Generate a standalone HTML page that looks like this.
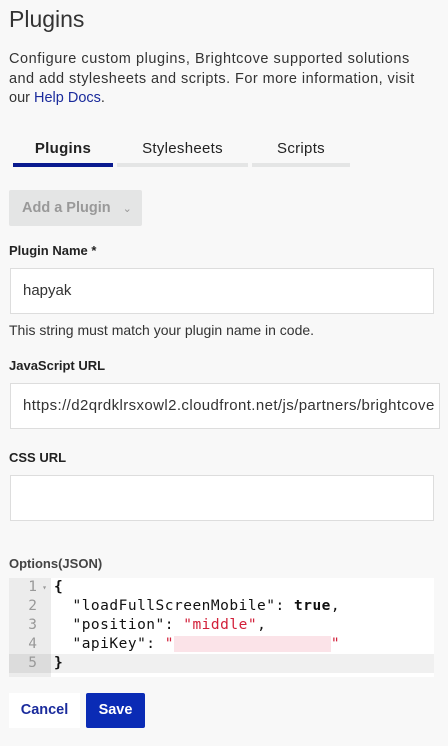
<!DOCTYPE html>
<html><head><style>
body{margin:0;background:#f8f8f8;font-family:"Liberation Sans",sans-serif;color:#222;width:448px;height:746px;overflow:hidden;position:relative}
.a{position:absolute}
h1{position:absolute;left:9px;top:6px;margin:0;font-size:23px;font-weight:normal;color:#333}
.p{left:9px;top:50px;font-size:14.5px;line-height:19.5px;color:#333;width:440px;white-space:nowrap}
.p a{color:#1a2b9c;text-decoration:none}
.tab{font-size:15px;top:140px;text-align:center;color:#222;letter-spacing:0.3px}
.ul{top:163px;height:4px;background:#e4e5e5}
.lbl{left:9px;font-size:13px;font-weight:bold;color:#222}
.in{left:10px;width:424px;height:46px;background:#fff;border:1px solid #ddd;box-sizing:border-box;font-size:15px;color:#333;padding:13px 12px;white-space:nowrap;overflow:hidden}
.code{font-family:"DejaVu Sans Mono","Liberation Mono",monospace;font-size:14.5px;letter-spacing:0.5px}
.ln{left:9px;width:42px;text-align:right;color:#999;box-sizing:border-box;padding-right:14px;letter-spacing:0}
</style></head><body>
<h1>Plugins</h1>
<div class="a p"><span style="letter-spacing:0.55px">Configure custom plugins, Brightcove supported solutions</span><br><span style="letter-spacing:0.45px">and add stylesheets and scripts. For more information, visit</span><br>our <a>Help Docs</a>.</div>
<div class="a tab" style="left:13px;width:100px;font-weight:bold">Plugins</div>
<div class="a tab" style="left:117px;width:131px">Stylesheets</div>
<div class="a tab" style="left:252px;width:98px">Scripts</div>
<div class="a ul" style="left:13px;width:100px;background:#0a1a8f"></div>
<div class="a ul" style="left:117px;width:131px"></div>
<div class="a ul" style="left:252px;width:98px"></div>
<div class="a" style="left:9px;top:190px;width:133px;height:36px;background:#e4e5e5;border-radius:2px;color:#999;font-weight:bold;font-size:14.5px;line-height:36px;padding-left:13px;box-sizing:border-box">Add a Plugin <span style="font-weight:normal;font-size:11px;margin-left:8px">&#8964;</span></div>
<div class="a lbl" style="top:243px">Plugin Name *</div>
<div class="a in" style="top:268px">hapyak</div>
<div class="a" style="left:9px;top:322px;font-size:14px;color:#333">This string must match your plugin name in code.</div>
<div class="a lbl" style="top:358px">JavaScript URL</div>
<div class="a in" style="top:383px;width:430px;letter-spacing:0.4px">https://d2qrdklrsxowl2.cloudfront.net/js/partners/brightcove</div>
<div class="a lbl" style="top:450px">CSS URL</div>
<div class="a in" style="top:475px"></div>
<div class="a lbl" style="top:556px;color:#444">Options(JSON)</div>
<div class="a" style="left:9px;top:578px;width:425px;height:99px;background:#fff"></div>
<div class="a" style="left:9px;top:578px;width:42px;height:99px;background:#ececec"></div>
<div class="a" style="left:9px;top:654px;width:425px;height:19px;background:#f0f0f0"></div>
<div class="a" style="left:9px;top:654px;width:42px;height:19px;background:#dcdcdc"></div>
<div class="a code" style="left:0;top:578px;line-height:19px;width:448px">
<div class="a ln" style="top:0">1<span style="font-size:8px;position:absolute;right:4px">&#9662;</span></div><div class="a ln" style="top:19px">2</div><div class="a ln" style="top:38px">3</div><div class="a ln" style="top:57px">4</div><div class="a ln" style="top:76px">5</div>
<div class="a" style="left:54px;top:0;white-space:pre;color:#111"><b>{</b>
  "loadFullScreenMobile": <b>true</b>,
  "position": <span style="color:#d2203a">"middle"</span>,
  "apiKey": <span style="color:#d2203a">"<span style="color:#f6d0d8;background:#fbe3e8">                 </span>"</span>
<b>}</b></div></div>
<div class="a" style="left:9px;top:693px;width:71px;height:35px;background:#fff;color:#1a2b9c;font-weight:bold;font-size:14.5px;line-height:35px;text-align:center">Cancel</div>
<div class="a" style="left:86px;top:693px;width:59px;height:35px;background:#0a2bb5;border-radius:2px;color:#fff;font-weight:bold;font-size:14.5px;line-height:35px;text-align:center">Save</div>
</body></html>
